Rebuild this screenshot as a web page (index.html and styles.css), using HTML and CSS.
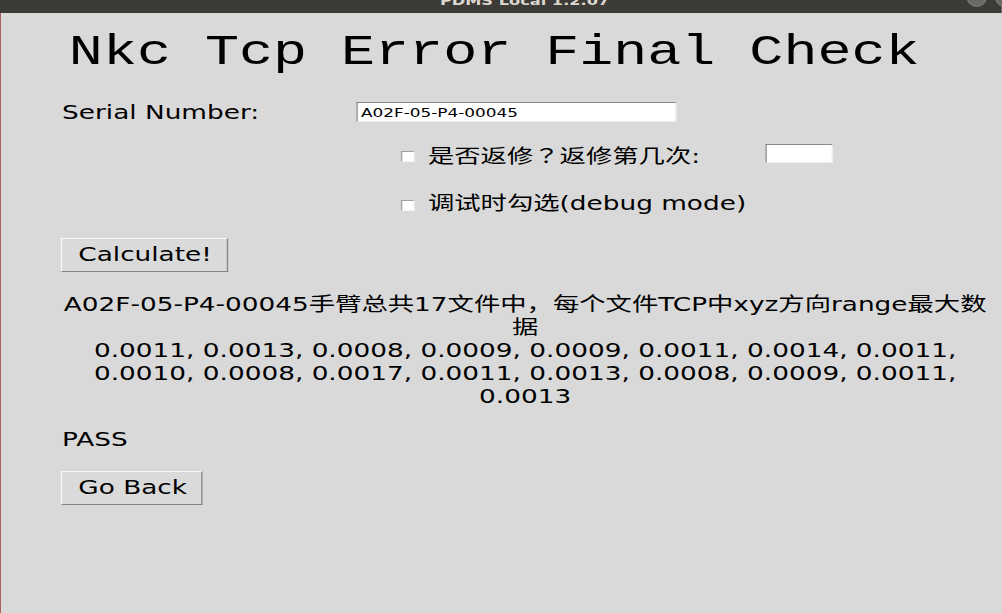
FILE: index.html
```html
<!DOCTYPE html>
<html lang="zh">
<head>
<meta charset="utf-8">
<title>PDMS Local 1.2.07</title>
<link rel="stylesheet" href="styles.css">
</head>
<body>
<div class="stage">
  <div class="titlebar">
    <span class="wintitle">PDMS Local 1.2.07</span>
    <span class="winbtns"><i class="wb"></i><i class="wb"></i></span>
  </div>
  <main class="content">
    <h1 class="title">Nkc Tcp Error Final Check</h1>
    <div class="serial-row">
      <label class="lbl" for="sn">Serial Number:</label>
      <input id="sn" class="entry" type="text" value="A02F-05-P4-00045">
    </div>
    <div class="check-row row1">
      <label class="check-item"><input type="checkbox" class="cb"><span class="cb-text">是否返修<span class="fwq" lang="ja">？</span>返修第几次:</span></label>
      <input class="entry small" type="text" value="">
    </div>
    <div class="check-row row2">
      <label class="check-item"><input type="checkbox" class="cb"><span class="cb-text">调试时勾选(debug mode)</span></label>
    </div>
    <button class="btn calc" type="button">Calculate!</button>
    <p class="result">A02F-05-P4-00045手臂总共17文件中，每个文件TCP中xyz方向range最大数据<br>0.0011, 0.0013, 0.0008, 0.0009, 0.0009, 0.0011, 0.0014, 0.0011, 0.0010, 0.0008, 0.0017, 0.0011, 0.0013, 0.0008, 0.0009, 0.0011, 0.0013</p>
    <p class="status">PASS</p>
    <button class="btn back" type="button">Go Back</button>
  </main>
</div>
</body>
</html>
```

FILE: styles.css
```css
html, body {
  margin: 0;
  padding: 0;
  height: 100%;
}
body {
  background: #d9d9d9;
  overflow: hidden;
  box-shadow: inset 1px 0 0 #b3605b;
  font-family: "DejaVu Sans", "Noto Sans CJK SC", sans-serif;
  color: #000;
}
.stage {
  width: 742.2px;
  transform: scaleX(1.35);
  transform-origin: 0 0;
}
.titlebar {
  height: 13px;
  background: #3c3b37;
  overflow: hidden;
  display: flex;
  position: relative;
}
.wintitle {
  display: block;
  flex: 1;
  margin-top: -5px;
  padding-left: 35px;
  text-align: center;
  font: bold 12px/12px "DejaVu Sans", sans-serif;
  color: #dcd8cf;
}
.winbtns {
  position: absolute;
  right: -10px;
  top: -13px;
  display: flex;
  gap: 6px;
}
.wb {
  display: block;
  width: 13px;
  height: 18px;
  border-radius: 50%;
  background: #6a6965;
  border: 1px solid #7a7975;
}
.content {
  padding-left: 45px;
}
.title {
  margin: 16px 0 0 6px;
  font: normal 42px/48px "Liberation Mono", monospace;
  white-space: nowrap;
}
.serial-row {
  margin-top: 24px;
  display: flex;
  align-items: flex-start;
}
.lbl {
  width: 219.4px;
  padding-left: 1px;
  box-sizing: border-box;
  font-size: 19.5px;
  line-height: 23px;
}
.entry {
  box-sizing: border-box;
  margin: 1px 0 0;
  width: 237px;
  height: 20px;
  padding: 0 0 0 2px;
  background: #fff;
  border: 1px solid;
  border-color: #8a8a8a #ededed #ededed #8a8a8a;
  font: 12.5px/18px "DejaVu Sans", sans-serif;
  color: #000;
  outline: none;
}
.entry.small {
  width: 50px;
  height: 19px;
}
.check-row {
  display: flex;
  align-items: flex-start;
  padding-left: 252px;
  font-size: 19.5px;
  line-height: 23px;
}
.row1 { margin-top: 19px; }
.row2 { margin-top: 24px; }
.check-item {
  display: flex;
  align-items: flex-start;
  width: 270.4px;
  white-space: nowrap;
}
.fwq {
  font-family: "Noto Sans CJK JP", "Noto Sans CJK SC", sans-serif;
}
.cb {
  -webkit-appearance: none;
  appearance: none;
  box-sizing: border-box;
  margin: 8px 10px 0 0;
  width: 10px;
  height: 10.5px;
  background: #fff;
  border: 1px solid;
  border-color: #a0a0a0 #f4f4f4 #f4f4f4 #a0a0a0;
  flex: none;
}
.btn {
  display: block;
  box-sizing: border-box;
  height: 34px;
  margin: 0;
  padding: 5px 0 5px 12px;
  text-align: left;
  white-space: nowrap;
  background: #dadada;
  border: 1px solid;
  border-color: #f7f7f7 #858585 #858585 #f7f7f7;
  font: 19.5px/22px "DejaVu Sans", sans-serif;
  color: #000;
  border-radius: 0;
}
.calc {
  margin-top: 23px;
  width: 124px;
}
.back {
  margin-top: 20px;
  width: 104.5px;
}
.result {
  margin: 21px 0 0 -2px;
  width: 692px;
  text-align: center;
  font-size: 19.5px;
  line-height: 23px;
}
.status {
  margin: 20px 0 0;
  padding-left: 1px;
  font-size: 19.5px;
  line-height: 23px;
}
```
